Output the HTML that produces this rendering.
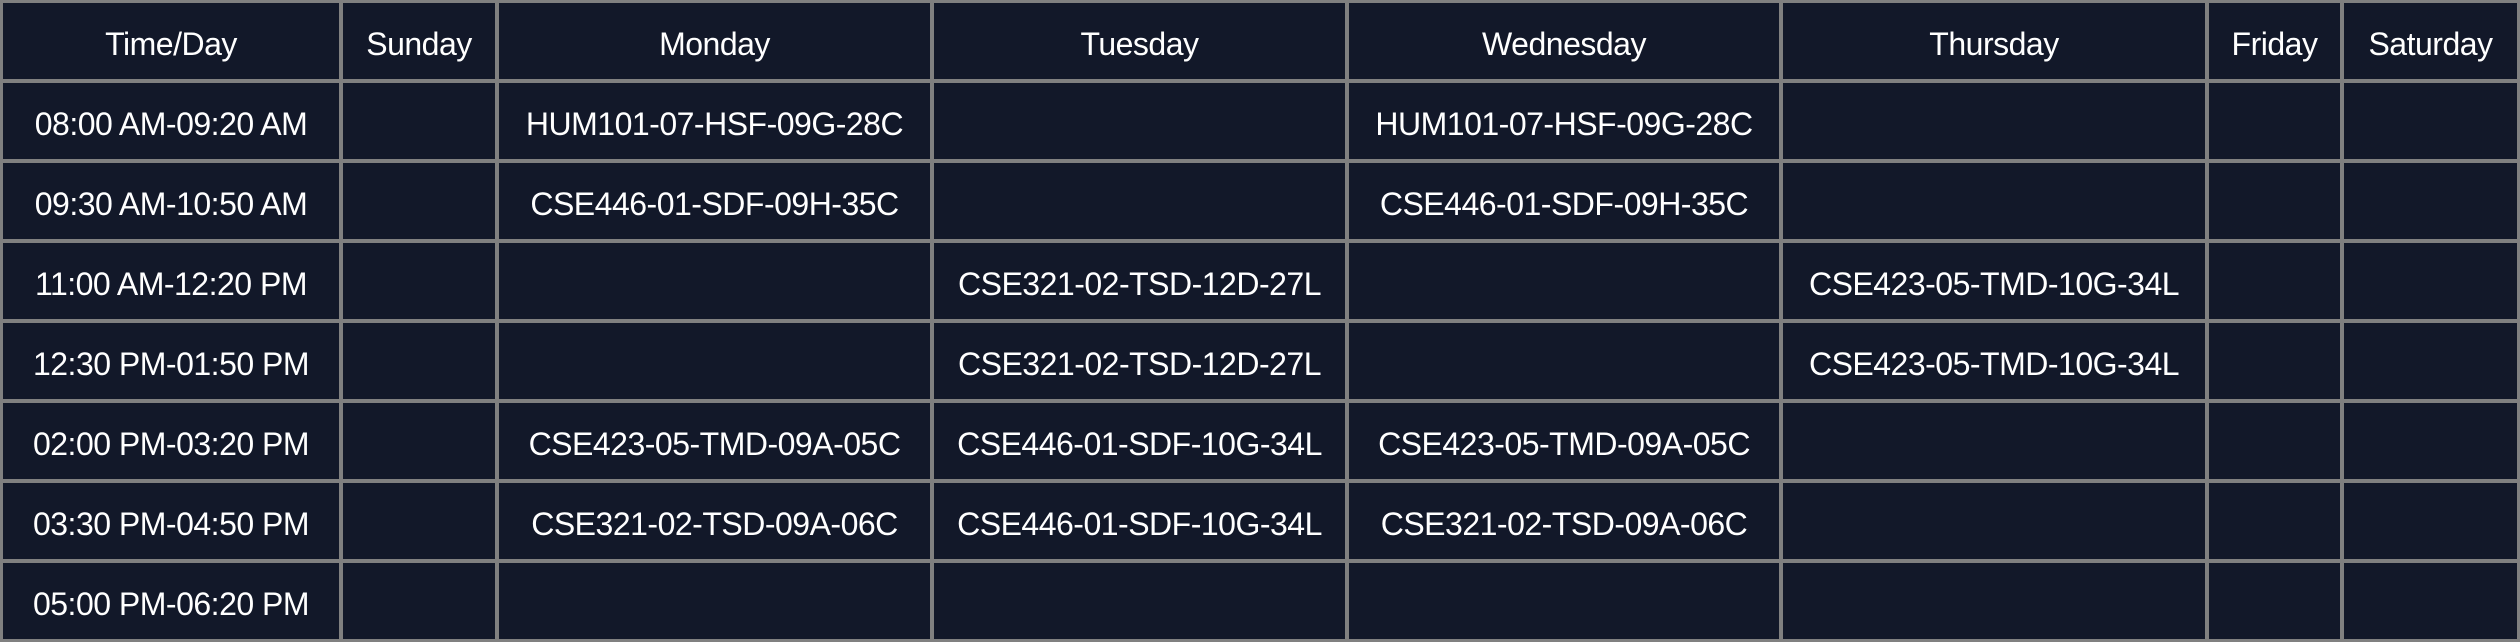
<!DOCTYPE html>
<html><head><meta charset="utf-8"><style>
html,body{margin:0;padding:0;}
body{width:2520px;height:642px;overflow:hidden;background:#808080;}
.g{display:grid;box-sizing:border-box;width:2520px;height:642px;padding:3px;gap:4px;
grid-template-columns:336px 152px 431px 411px 430px 422px 131px 173px;
grid-template-rows:repeat(8,76px);}
.g div{background:#121829;color:#fff;display:flex;align-items:center;justify-content:center;box-sizing:border-box;padding-top:6px;
font-family:"Liberation Sans",sans-serif;font-size:32px;letter-spacing:-0.5px;white-space:nowrap;}
</style></head><body><div class="g">
<div>Time/Day</div><div>Sunday</div><div>Monday</div><div>Tuesday</div><div>Wednesday</div><div>Thursday</div><div>Friday</div><div>Saturday</div>
<div>08:00 AM-09:20 AM</div><div></div><div>HUM101-07-HSF-09G-28C</div><div></div><div>HUM101-07-HSF-09G-28C</div><div></div><div></div><div></div>
<div>09:30 AM-10:50 AM</div><div></div><div>CSE446-01-SDF-09H-35C</div><div></div><div>CSE446-01-SDF-09H-35C</div><div></div><div></div><div></div>
<div>11:00 AM-12:20 PM</div><div></div><div></div><div>CSE321-02-TSD-12D-27L</div><div></div><div>CSE423-05-TMD-10G-34L</div><div></div><div></div>
<div>12:30 PM-01:50 PM</div><div></div><div></div><div>CSE321-02-TSD-12D-27L</div><div></div><div>CSE423-05-TMD-10G-34L</div><div></div><div></div>
<div>02:00 PM-03:20 PM</div><div></div><div>CSE423-05-TMD-09A-05C</div><div>CSE446-01-SDF-10G-34L</div><div>CSE423-05-TMD-09A-05C</div><div></div><div></div><div></div>
<div>03:30 PM-04:50 PM</div><div></div><div>CSE321-02-TSD-09A-06C</div><div>CSE446-01-SDF-10G-34L</div><div>CSE321-02-TSD-09A-06C</div><div></div><div></div><div></div>
<div>05:00 PM-06:20 PM</div><div></div><div></div><div></div><div></div><div></div><div></div><div></div>
</div></body></html>
